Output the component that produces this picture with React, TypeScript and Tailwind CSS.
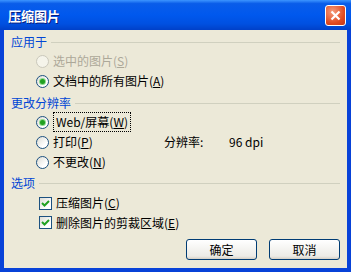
const font = "font-['SimSun','Noto_Sans_CJK_SC',sans-serif]";

const Radio = ({ checked, disabled }: { checked?: boolean; disabled?: boolean }) => (
  <span
    className={`flex h-[13px] w-[13px] shrink-0 items-center justify-center rounded-full border ${
      disabled
        ? "border-[#CAC8BB] bg-[#F5F4EA]"
        : "border-[#1C5180] bg-[linear-gradient(135deg,#DCDCD5,#FFFFFF_70%)]"
    }`}
  >
    {checked && <span className="h-[5px] w-[5px] rounded-full bg-[#21A121] shadow-[0_0_0_1px_#8FDA8F]" />}
  </span>
);

const Check = () => (
  <span className="flex h-[13px] w-[13px] shrink-0 items-center justify-center border border-[#1C5180] bg-[linear-gradient(135deg,#DCDCD5,#FFFFFF_70%)]">
    <svg width="9" height="9" viewBox="0 0 9 9">
      <path d="M1 4 L3.5 6.5 L8 2" stroke="#21A121" strokeWidth="2" fill="none" />
    </svg>
  </span>
);

const Group = ({ label }: { label: string }) => (
  <div className="flex h-[18px] items-center pl-[7px] pr-[7px]">
    <span className="text-[#0046D5]">{label}</span>
    <span className="ml-[4px] h-px flex-1 bg-[#D0D0BF]" />
  </div>
);

const Button = ({ children }: { children: React.ReactNode }) => (
  <button className="flex h-[21px] w-[71px] items-center justify-center rounded-[3px] border border-[#003C74] bg-[linear-gradient(#FFFFFF,#ECEBE6_85%,#D6D0C5)] text-black">
    {children}
  </button>
);

export default function App() {
  return (
    <div className={`flex h-[272px] w-[351px] flex-col text-[12px] leading-none text-black ${font}`}>
      <div className="flex h-[30px] shrink-0 items-center justify-between bg-[linear-gradient(#3D95FF,#0A5DE9_12%,#0058EE_50%,#0050E0_80%,#0040C8)] pl-[8px] pr-[5px]">
        <span className="text-[13px] font-bold text-white [text-shadow:1px_1px_#0A1E80]">压缩图片</span>
        <span className="flex h-[21px] w-[21px] items-center justify-center rounded-[3px] border border-white bg-[radial-gradient(circle_at_35%_30%,#F59C7C,#E0491F_65%,#C1391A)]">
          <svg width="11" height="11" viewBox="0 0 11 11">
            <path d="M1.5 1.5 L9.5 9.5 M9.5 1.5 L1.5 9.5" stroke="white" strokeWidth="2.2" />
          </svg>
        </span>
      </div>
      <div className="flex flex-1 flex-col border-x-[4px] border-b-[4px] border-[#0842D8] bg-[#ECE9D8] pt-[3px]">
        <Group label="应用于" />
        <div className="flex h-[20px] items-center gap-[4px] pl-[32px] text-[#ACA899]">
          <Radio disabled />
          <span>
            选中的图片(<u>S</u>)
          </span>
        </div>
        <div className="flex h-[20px] items-center gap-[4px] pl-[32px]">
          <Radio checked />
          <span>
            文档中的所有图片(<u>A</u>)
          </span>
        </div>
        <div className="mt-[3px]">
          <Group label="更改分辨率" />
        </div>
        <div className="flex h-[20px] items-center gap-[4px] pl-[32px]">
          <Radio checked />
          <span className="flex h-[20px] items-center border border-dotted border-black px-[2px]">
            Web/屏幕(<u>W</u>)
          </span>
        </div>
        <div className="flex h-[20px] items-center pl-[32px]">
          <div className="flex w-[128px] items-center gap-[4px]">
            <Radio />
            <span>
              打印(<u>P</u>)
            </span>
          </div>
          <span className="w-[65px]">分辨率:</span>
          <span>96 dpi</span>
        </div>
        <div className="flex h-[20px] items-center gap-[4px] pl-[32px]">
          <Radio />
          <span>
            不更改(<u>N</u>)
          </span>
        </div>
        <div className="mt-[2px]">
          <Group label="选项" />
        </div>
        <div className="mt-[1px] flex h-[20px] items-center gap-[4px] pl-[35px]">
          <Check />
          <span>
            压缩图片(<u>C</u>)
          </span>
        </div>
        <div className="flex h-[19px] items-center gap-[4px] pl-[35px]">
          <Check />
          <span>
            删除图片的剪裁区域(<u>E</u>)
          </span>
        </div>
        <div className="mt-[7px] flex justify-end gap-[12px] pr-[7px]">
          <Button>确定</Button>
          <Button>取消</Button>
        </div>
      </div>
    </div>
  );
}
